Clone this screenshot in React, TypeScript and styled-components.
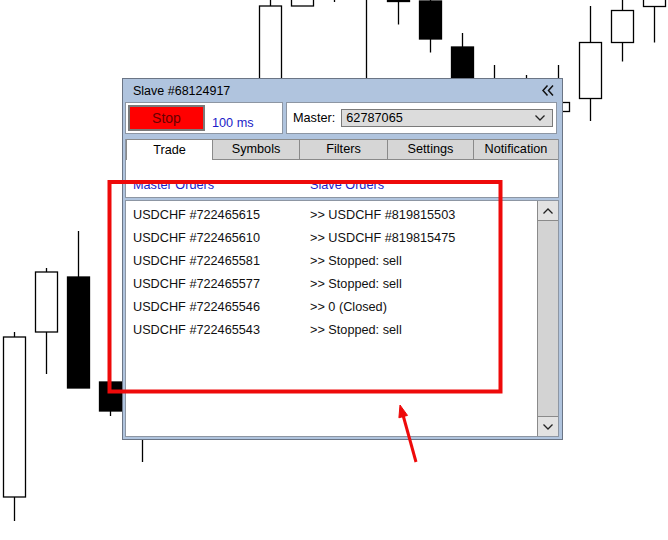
import React from 'react';
import styled, { createGlobalStyle } from 'styled-components';

const GlobalStyle = createGlobalStyle`
  html, body {
    margin: 0;
    padding: 0;
    background: #ffffff;
  }
  body {
    font-family: "Liberation Sans", Arial, sans-serif;
  }
`;

type Candle = { x: number; top: number; bottom: number; hi: number; lo: number; bear: boolean };

// candles of the chart behind the panel (x = centre, body top/bottom, wick high/low)
const candles: Candle[] = [
  { x: 14.5, top: 337, bottom: 497, hi: 332, lo: 521, bear: false },
  { x: 46.5, top: 272, bottom: 332, hi: 268, lo: 374, bear: false },
  { x: 78.5, top: 277, bottom: 388, hi: 231, lo: 388, bear: true },
  { x: 110.5, top: 382, bottom: 411, hi: 382, lo: 416, bear: true },
  { x: 142.5, top: 300, bottom: 430, hi: 290, lo: 462, bear: true },
  { x: 270.5, top: 6, bottom: 200, hi: -5, lo: 220, bear: false },
  { x: 302.5, top: -20, bottom: 6, hi: -25, lo: 6, bear: false },
  { x: 334.5, top: -20, bottom: -4, hi: -25, lo: 2, bear: false },
  { x: 366.5, top: 150, bottom: 250, hi: -5, lo: 260, bear: false },
  { x: 398.5, top: -10, bottom: 1.5, hi: -15, lo: 24.5, bear: true },
  { x: 430.5, top: 1, bottom: 39, hi: -5, lo: 52.5, bear: true },
  { x: 462.5, top: 47, bottom: 150, hi: 33, lo: 160, bear: true },
  { x: 494.5, top: 90, bottom: 150, hi: 65, lo: 160, bear: false },
  { x: 526.5, top: 90, bottom: 150, hi: 75, lo: 160, bear: false },
  { x: 558.5, top: 102.5, bottom: 111.5, hi: 65, lo: 130, bear: false },
  { x: 590.5, top: 42.5, bottom: 98.5, hi: 6, lo: 121, bear: false },
  { x: 622.5, top: 10.5, bottom: 42.5, hi: -5, lo: 61.5, bear: false },
  { x: 654.5, top: -10, bottom: 6.5, hi: -15, lo: 42.5, bear: false },
];

const orders = [
  ['USDCHF #722465615', '>> USDCHF #819815503'],
  ['USDCHF #722465610', '>> USDCHF #819815475'],
  ['USDCHF #722465581', '>> Stopped: sell'],
  ['USDCHF #722465577', '>> Stopped: sell'],
  ['USDCHF #722465546', '>> 0 (Closed)'],
  ['USDCHF #722465543', '>> Stopped: sell'],
];

const tabs = ['Trade', 'Symbols', 'Filters', 'Settings', 'Notification'];

const Stage = styled.div`
  position: relative;
  width: 668px;
  height: 540px;
  overflow: hidden;
  background: #ffffff;
`;

const ChartSvg = styled.svg`
  position: absolute;
  left: 0;
  top: 0;
`;

const Overlay = styled.svg`
  position: absolute;
  left: 0;
  top: 0;
  pointer-events: none;
`;

const Window = styled.div`
  position: absolute;
  left: 122px;
  top: 78px;
  width: 441px;
  height: 362px;
  box-sizing: border-box;
  border: 1px solid #6b7585;
  background: #b0c4de;
  padding: 0 2px 2px 2px;
  display: flex;
  flex-direction: column;
  font-family: "Liberation Sans", Arial, sans-serif;
  color: #000;
`;

const TitleBar = styled.div`
  height: 23px;
  display: flex;
  align-items: center;
  justify-content: space-between;
  padding: 0 6px 0 8px;
  font-size: 12.5px;
`;

const ControlsRow = styled.div`
  display: flex;
  gap: 3px;
  height: 32px;
`;

const Box = styled.div<{ $w: number }>`
  width: ${(p) => p.$w}px;
  box-sizing: border-box;
  background: #ffffff;
  border: 1px solid #8d96a3;
  display: flex;
  align-items: center;
`;

const StopButton = styled.div`
  width: 77px;
  height: 26px;
  margin-left: 2px;
  box-sizing: border-box;
  background: #ff0000;
  border: 2px solid #7a7a7a;
  color: #6a0000;
  font-size: 14px;
  display: flex;
  align-items: center;
  justify-content: center;
`;

const Interval = styled.span`
  align-self: flex-end;
  margin: 0 0 3px 7px;
  color: #1c1cc8;
  font-size: 12.7px;
`;

const Label = styled.span`
  font-size: 12.7px;
  margin: 0 6px 0 6px;
`;

const Select = styled.div`
  flex: 1;
  height: 18px;
  margin-right: 3px;
  box-sizing: border-box;
  background: #dcdcdc;
  border: 1px solid #7a7a7a;
  display: flex;
  align-items: center;
  justify-content: space-between;
  padding: 0 7px 0 4px;
  font-size: 12.7px;
`;

const TabArea = styled.div`
  margin-top: 5px;
  width: 434px;
  height: 59px;
  box-sizing: border-box;
  background: #ffffff;
  border: 1px solid #8d96a3;
  border-top: none;
  display: flex;
  flex-direction: column;
`;

const TabStrip = styled.div`
  display: grid;
  grid-template-columns: 87px 87px 88px 86px 1fr;
  height: 21px;
`;

const Tab = styled.div<{ $active?: boolean }>`
  box-sizing: border-box;
  display: flex;
  align-items: center;
  justify-content: center;
  font-size: 12.7px;
  padding-bottom: 1px;
  background: ${(p) => (p.$active ? '#ffffff' : '#d6d6d6')};
  border-top: 1px solid #8a8a8a;
  border-right: 1px solid #8a8a8a;
  border-bottom: ${(p) => (p.$active ? 'none' : '1px solid #8a8a8a')};
  &:first-child {
    border-left: 1px solid #8a8a8a;
  }
  &:last-child {
    border-right: none;
  }
`;

const HeaderRow = styled.div`
  flex: 1;
  display: grid;
  grid-template-columns: 177px 1fr;
  align-items: end;
  padding: 0 0 5px 7px;
  color: #1c1cc8;
  font-size: 12.7px;
`;

const ListBox = styled.div`
  margin-top: 2px;
  width: 434px;
  flex: 1;
  box-sizing: border-box;
  background: #ffffff;
  border: 1px solid #8d96a3;
  display: flex;
`;

const Rows = styled.div`
  flex: 1;
  padding: 2px 0 0 7px;
`;

const Row = styled.div`
  display: grid;
  grid-template-columns: 177px 1fr;
  height: 23px;
  align-items: center;
  font-size: 12.7px;
  color: #111;
`;

const ScrollBar = styled.div`
  width: 21px;
  display: flex;
  flex-direction: column;
  background: #d3d3d3;
  border-left: 1px solid #8a8a8a;
  box-sizing: border-box;
`;

const ScrollButton = styled.div<{ $down?: boolean }>`
  height: 20px;
  box-sizing: border-box;
  background: #e2e2e2;
  display: flex;
  align-items: center;
  justify-content: center;
  border-bottom: ${(p) => (p.$down ? 'none' : '1px solid #8a8a8a')};
  border-top: ${(p) => (p.$down ? '1px solid #8a8a8a' : 'none')};
`;

const Track = styled.div`
  flex: 1;
`;

const Chevron = ({ up = false, w = 10 }: { up?: boolean; w?: number }) => (
  <svg width={w} height={6} viewBox="0 0 10 6">
    <polyline
      points={up ? '0.5,5.5 5,1 9.5,5.5' : '0.5,0.5 5,5 9.5,0.5'}
      fill="none"
      stroke="#222"
      strokeWidth="1.3"
    />
  </svg>
);

const Collapse = () => (
  <svg width={12} height={11} viewBox="0 0 12 11">
    <polyline points="5.5,0.5 1,5.5 5.5,10.5" fill="none" stroke="#111" strokeWidth="1.5" />
    <polyline points="11,0.5 6.5,5.5 11,10.5" fill="none" stroke="#111" strokeWidth="1.5" />
  </svg>
);

const Chart = () => (
  <ChartSvg width={668} height={540}>
    {candles.map((c, i) => (
      <g key={i}>
        <line x1={c.x} x2={c.x} y1={c.hi} y2={c.lo} stroke="#000" strokeWidth="1.3" />
        <rect
          x={c.x - 11}
          y={c.top}
          width={22}
          height={c.bottom - c.top}
          fill={c.bear ? '#000' : '#fff'}
          stroke="#000"
          strokeWidth="1.3"
        />
      </g>
    ))}
  </ChartSvg>
);

const Annotation = () => (
  <Overlay width={668} height={540}>
    <rect x={109.5} y={182} width={391} height={209.5} fill="none" stroke="#ee0a0a" strokeWidth="4" />
    <line x1={416} y1={462} x2={403} y2={415} stroke="#ee0a0a" strokeWidth="3" />
    <polygon points="400,405 407.5,415.4 398.9,417.8" fill="#ee0a0a" stroke="#ee0a0a" strokeWidth="1" />
  </Overlay>
);

export default function App() {
  return (
    <Stage>
      <GlobalStyle />
      <Chart />
      <Window>
        <TitleBar>
          <span>Slave #68124917</span>
          <Collapse />
        </TitleBar>
        <ControlsRow>
          <Box $w={158}>
            <StopButton>Stop</StopButton>
            <Interval>100 ms</Interval>
          </Box>
          <Box $w={271}>
            <Label>Master:</Label>
            <Select>
              <span>62787065</span>
              <Chevron />
            </Select>
          </Box>
        </ControlsRow>
        <TabArea>
          <TabStrip>
            {tabs.map((t, i) => (
              <Tab key={t} $active={i === 0}>
                {t}
              </Tab>
            ))}
          </TabStrip>
          <HeaderRow>
            <span>Master Orders</span>
            <span>Slave Orders</span>
          </HeaderRow>
        </TabArea>
        <ListBox>
          <Rows>
            {orders.map((o) => (
              <Row key={o[0]}>
                <span>{o[0]}</span>
                <span>{o[1]}</span>
              </Row>
            ))}
          </Rows>
          <ScrollBar>
            <ScrollButton>
              <Chevron up />
            </ScrollButton>
            <Track />
            <ScrollButton $down>
              <Chevron />
            </ScrollButton>
          </ScrollBar>
        </ListBox>
      </Window>
      <Annotation />
    </Stage>
  );
}
